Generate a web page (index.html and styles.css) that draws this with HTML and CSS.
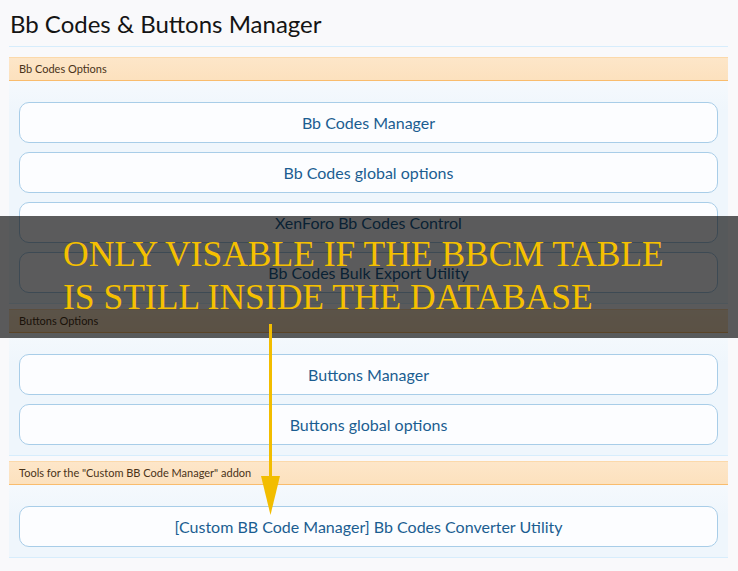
FILE: index.html
```html
<!DOCTYPE html>
<html>
<head>
<meta charset="utf-8">
<link rel="stylesheet" href="styles.css">
</head>
<body>
<div class="page">
  <h1 class="title">Bb Codes &amp; Buttons Manager</h1>

  <div class="section">
    <div class="section-head">Bb Codes Options</div>
    <div class="section-body">
      <a class="btn">Bb Codes Manager</a>
      <a class="btn">Bb Codes global options</a>
      <a class="btn">XenForo Bb Codes Control</a>
      <a class="btn">Bb Codes Bulk Export Utility</a>
    </div>
  </div>

  <div class="section">
    <div class="section-head">Buttons Options</div>
    <div class="section-body">
      <a class="btn">Buttons Manager</a>
      <a class="btn">Buttons global options</a>
    </div>
  </div>

  <div class="section">
    <div class="section-head">Tools for the "Custom BB Code Manager" addon</div>
    <div class="section-body">
      <a class="btn">[Custom BB Code Manager] Bb Codes Converter Utility</a>
    </div>
  </div>
</div>

<div class="overlay">
  <div class="overlay-text">ONLY VISABLE IF THE BBCM TABLE<br>IS STILL INSIDE THE DATABASE</div>
</div>

<svg class="arrow" width="738" height="571" viewBox="0 0 738 571">
  <line x1="270.5" y1="324" x2="270.5" y2="480" stroke="#f2bd00" stroke-width="3"/>
  <polygon points="261,476 280,476 270.5,515" fill="#f2bd00"/>
</svg>
</body>
</html>
```

FILE: styles.css
```css
html, body {
  margin: 0;
  padding: 0;
}
body {
  background: #f9f9fb;
  font-family: Lato, "DejaVu Sans", sans-serif;
  width: 738px;
  height: 571px;
  overflow: hidden;
  position: relative;
}
.page {
  padding: 0 10px 0 9px;
}
.title {
  margin: 0;
  padding: 10px 0 8px 1px;
  font-size: 24px;
  line-height: 28px;
  font-weight: normal;
  color: #141414;
  border-bottom: 1px solid #d7edfc;
  margin-bottom: 10px;
}
.section {
  margin-bottom: 5px;
}
.section-head {
  height: 22px;
  line-height: 22px;
  font-size: 11px;
  color: #4a3319;
  padding-left: 10px;
  border-top: 1px solid #fbd9ab;
  border-bottom: 1px solid #f9bc6d;
  background: linear-gradient(#fde6c9, #fce1be);
}
.section-body {
  background: linear-gradient(#f5f9fd, #eff6fc 30px);
  padding: 21px 10px 10px;
  border-bottom: 1px solid #d7edfc;
  display: flex;
  flex-direction: column;
  gap: 9px;
}
.btn {
  display: flex;
  align-items: center;
  justify-content: center;
  height: 39px;
  border: 1px solid #a8cde8;
  border-radius: 10px;
  background: #fcfdff;
  color: #1b5d91;
  font-size: 16px;
}
.overlay {
  position: absolute;
  left: 0;
  top: 216px;
  width: 738px;
  height: 122px;
  background: rgba(0, 0, 0, 0.64);
}
.overlay-text {
  padding: 17px 0 0 63px;
  font-family: "Liberation Serif", "Times New Roman", serif;
  font-size: 35.5px;
  line-height: 43px;
  color: #f5c000;
  white-space: nowrap;
}
.arrow {
  position: absolute;
  left: 0;
  top: 0;
}
```
